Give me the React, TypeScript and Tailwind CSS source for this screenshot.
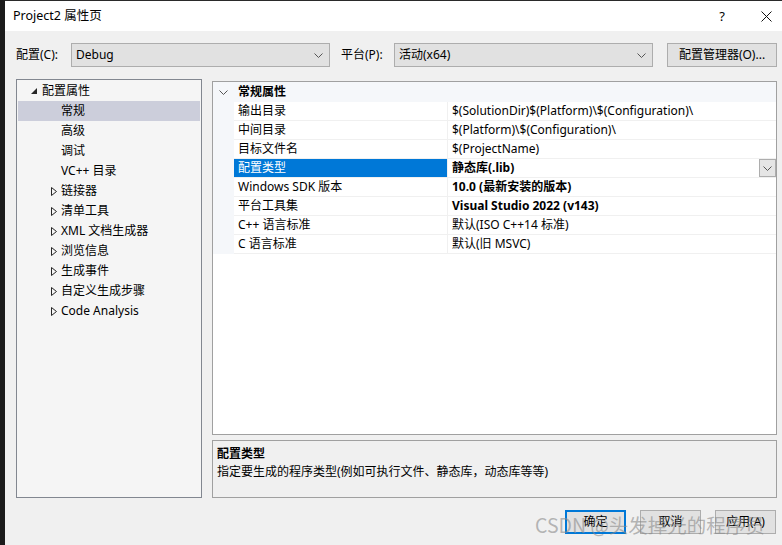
import React from "react";

const treeItems: { label: string; level: 0 | 1; expand?: "open" | "closed"; selected?: boolean }[] = [
  { label: "配置属性", level: 0, expand: "open" },
  { label: "常规", level: 1, selected: true },
  { label: "高级", level: 1 },
  { label: "调试", level: 1 },
  { label: "VC++ 目录", level: 1 },
  { label: "链接器", level: 1, expand: "closed" },
  { label: "清单工具", level: 1, expand: "closed" },
  { label: "XML 文档生成器", level: 1, expand: "closed" },
  { label: "浏览信息", level: 1, expand: "closed" },
  { label: "生成事件", level: 1, expand: "closed" },
  { label: "自定义生成步骤", level: 1, expand: "closed" },
  { label: "Code Analysis", level: 1, expand: "closed" },
];

const props: { name: string; value: string; bold?: boolean; selected?: boolean }[] = [
  { name: "输出目录", value: "$(SolutionDir)$(Platform)\\$(Configuration)\\" },
  { name: "中间目录", value: "$(Platform)\\$(Configuration)\\" },
  { name: "目标文件名", value: "$(ProjectName)" },
  { name: "配置类型", value: "静态库(.lib)", bold: true, selected: true },
  { name: "Windows SDK 版本", value: "10.0 (最新安装的版本)", bold: true },
  { name: "平台工具集", value: "Visual Studio 2022 (v143)", bold: true },
  { name: "C++ 语言标准", value: "默认(ISO C++14 标准)" },
  { name: "C 语言标准", value: "默认(旧 MSVC)" },
];

function Chevron({ className = "" }: { className?: string }) {
  return (
    <svg width="9" height="5" viewBox="0 0 9 5" className={className}>
      <path d="M0.5 0.5 L4.5 4.5 L8.5 0.5" fill="none" stroke="#555" strokeWidth="1" />
    </svg>
  );
}

function Combo({ value, width }: { value: string; width: string }) {
  return (
    <div className={`${width} h-[24px] bg-[#e1e1e1] border border-[#adadad] flex items-center pl-[4px] pr-[6px]`}>
      <span className="flex-1">{value}</span>
      <Chevron />
    </div>
  );
}

export default function App() {
  return (
    <div className="w-[782px] h-[545px] flex bg-[#1b1b1b] overflow-hidden text-[12px] leading-[16px] text-black font-['Noto_Sans','Noto_Sans_CJK_SC',sans-serif] relative">
      {/* desktop strip */}
      <div className="w-[5px] shrink-0 bg-[#1b1b1b]" />

      <div className="flex-1 flex flex-col">
        {/* title bar */}
        <div className="h-[31px] shrink-0 bg-white border-t border-[#2a2a2a] flex items-center pl-[8px] pr-[10px]">
          <span className="flex-1 text-[12.5px]">Project2 属性页</span>
          <span className="w-[10px] text-center mr-[34px] text-[13px]">?</span>
          <svg width="11" height="11" viewBox="0 0 11 11">
            <path d="M0.5 0.5 L10.5 10.5 M10.5 0.5 L0.5 10.5" stroke="#111" strokeWidth="1" />
          </svg>
        </div>

        {/* body */}
        <div className="flex-1 bg-[#f0f0f0] flex flex-col pl-[11px] pr-[5px] pt-[12px]">
          {/* config row */}
          <div className="flex items-center h-[24px]">
            <span className="w-[55px]">配置(C):</span>
            <Combo value="Debug" width="w-[259px]" />
            <span className="ml-[11px] w-[53px]">平台(P):</span>
            <Combo value="活动(x64)" width="w-[259px]" />
            <div className="ml-[14px] w-[110px] h-[24px] bg-[#e1e1e1] border border-[#adadad] flex items-center justify-center">
              配置管理器(O)...
            </div>
          </div>

          {/* main */}
          <div className="flex mt-[12px] h-[419px]">
            {/* tree */}
            <div className="w-[186px] h-[419px] border border-[#828790] bg-[#f5f5f5] pt-[1px] px-[1px]">
              {treeItems.map((it) => (
                <div
                  key={it.label}
                  className={`h-[20px] flex items-center ${it.selected ? "bg-[#cccedb]" : ""}`}
                >
                  <div className={`${it.level === 0 ? "w-[25px]" : "w-[45px]"} shrink-0 flex justify-end pr-[6px]`}>
                    {it.expand === "open" && (
                      <svg width="6" height="6" viewBox="0 0 6 6">
                        <polygon points="6,0 6,6 0,6" fill="#262626" />
                      </svg>
                    )}
                    {it.expand === "closed" && (
                      <svg width="6" height="9" viewBox="0 0 6 9">
                        <polygon points="0.5,0.5 5.5,4.5 0.5,8.5" fill="none" stroke="#262626" strokeWidth="1" />
                      </svg>
                    )}
                  </div>
                  <span className={it.level === 0 ? "ml-[-1px]" : "ml-[-2px]"}>{it.label}</span>
                </div>
              ))}
            </div>

            {/* right column */}
            <div className="ml-[10px] flex-1 flex flex-col">
              {/* property grid */}
              <div className="mt-[2px] h-[356px] border border-[#a0a0a0] bg-white flex flex-col">
                <div className="h-[20px] bg-[#f5f7fa] flex items-center">
                  <div className="w-[21px] flex justify-center">
                    <Chevron />
                  </div>
                  <span className="font-bold ml-[4px]">常规属性</span>
                </div>
                {props.map((p) => (
                  <div key={p.name} className="h-[19px] flex">
                    <div className="w-[21px] shrink-0 bg-[#f5f7fa]" />
                    <div
                      className={`w-[214px] shrink-0 border-b border-r border-[#f0f0f0] flex items-center pl-[4px] ${
                        p.selected ? "bg-[#0078d7] text-white" : ""
                      }`}
                    >
                      {p.name}
                    </div>
                    <div className="flex-1 border-b border-[#f0f0f0] flex items-center pl-[4px]">
                      <span className={`flex-1 ${p.bold ? "font-bold" : ""}`}>{p.value}</span>
                      {p.selected && (
                        <div className="w-[17px] h-[18px] bg-[#e5e5e5] border border-[#adadad] flex items-center justify-center">
                          <Chevron />
                        </div>
                      )}
                    </div>
                  </div>
                ))}
                <div className="flex-1" />
              </div>

              {/* description */}
              <div className="mt-[5px] h-[58px] border border-[#a0a0a0] bg-[#f0f0f0] px-[4px] pt-[3px]">
                <div className="font-bold h-[19px] flex items-center">配置类型</div>
                <div className="h-[18px] flex items-center">
                  指定要生成的程序类型(例如可执行文件、静态库，动态库等等)
                </div>
              </div>
            </div>
          </div>

          {/* buttons */}
          <div className="flex justify-end mt-[12px] pr-[1px] gap-[14px]">
            <div className="w-[61px] h-[24px] border-2 border-[#0078d7] bg-[#e1e1e1] flex items-center justify-center">
              确定
            </div>
            <div className="w-[61px] h-[24px] border border-[#adadad] bg-[#e1e1e1] flex items-center justify-center">
              取消
            </div>
            <div className="w-[61px] h-[24px] border border-[#adadad] bg-[#e1e1e1] flex items-center justify-center">
              应用(A)
            </div>
          </div>
        </div>
      </div>

      {/* watermark */}
      <div className="absolute left-[535px] top-[511px] text-[19.5px] leading-[28px] text-[#8a8a8a]/60 font-['Noto_Sans_CJK_SC',sans-serif] whitespace-nowrap pointer-events-none">
        CSDN @头发掉光的程序员
      </div>
    </div>
  );
}
